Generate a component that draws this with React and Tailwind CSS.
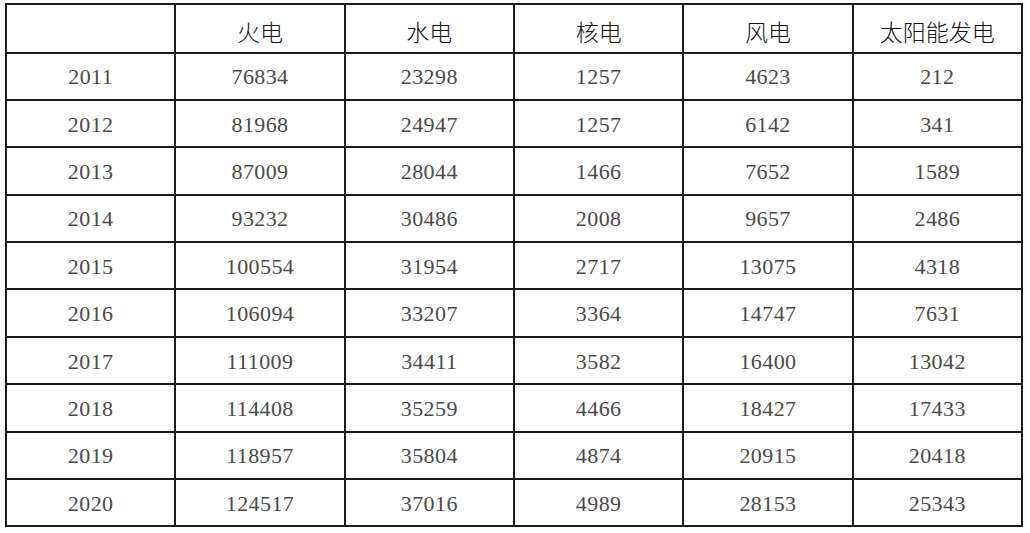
export default function App() {
  const headers = ["", "火电", "水电", "核电", "风电", "太阳能发电"];
  const rows = [
    ["2011", "76834", "23298", "1257", "4623", "212"],
    ["2012", "81968", "24947", "1257", "6142", "341"],
    ["2013", "87009", "28044", "1466", "7652", "1589"],
    ["2014", "93232", "30486", "2008", "9657", "2486"],
    ["2015", "100554", "31954", "2717", "13075", "4318"],
    ["2016", "106094", "33207", "3364", "14747", "7631"],
    ["2017", "111009", "34411", "3582", "16400", "13042"],
    ["2018", "114408", "35259", "4466", "18427", "17433"],
    ["2019", "118957", "35804", "4874", "20915", "20418"],
    ["2020", "124517", "37016", "4989", "28153", "25343"],
  ];
  return (
    <div className="w-[1030px] h-[533px] bg-white pt-[3px] pl-[5px]">
      <table className="w-[1018px] table-fixed border-collapse border-2 border-[#1a1a1a]">
        <thead>
          <tr className="h-[48.5px]">
            {headers.map((h, i) => (
              <th
                key={i}
                className="border-2 border-[#1a1a1a] p-0 pt-[6px] text-center font-light text-[23px] leading-none text-[#111] font-['Noto_Sans_CJK_SC',sans-serif]"
              >
                {h}
              </th>
            ))}
          </tr>
        </thead>
        <tbody>
          {rows.map((r, ri) => (
            <tr key={ri} className="h-[47.4px]">
              {r.map((c, ci) => (
                <td
                  key={ci}
                  className="border-2 border-[#1a1a1a] p-0 pt-[2px] text-center text-[22px] tracking-[0.4px] leading-none text-[#4a4a4a] font-['Liberation_Serif',serif]"
                >
                  {c}
                </td>
              ))}
            </tr>
          ))}
        </tbody>
      </table>
    </div>
  );
}
